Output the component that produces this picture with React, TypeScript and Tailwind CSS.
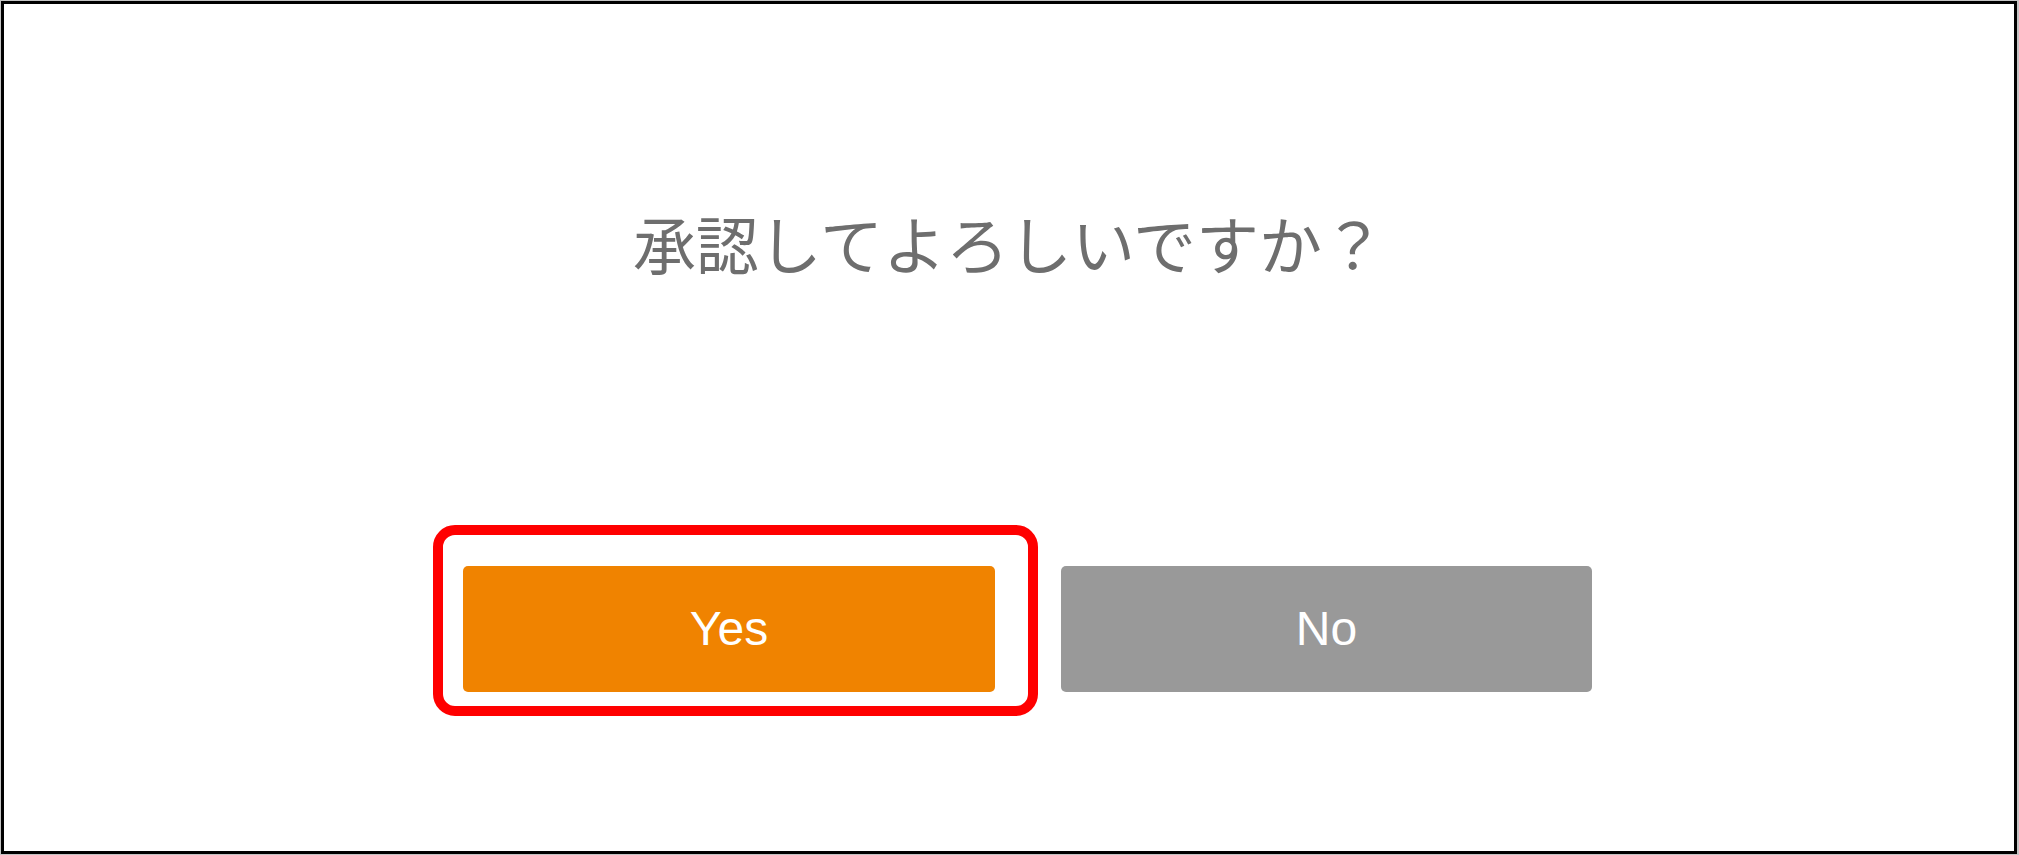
import React from "react";

const App: React.FC = () => {
  const handleYes = () => {};
  const handleNo = () => {};

  return (
    <div className="h-[855px] w-[2019px] bg-[#c4c4c4] pt-px pl-px pr-[2px] pb-px">
      <div
        className="flex h-full w-full flex-col items-center border-[3px] border-black bg-white"
        style={{ fontFamily: '"Noto Sans CJK JP", "Liberation Sans", sans-serif' }}
      >
        <p className="mt-[206px] text-[63px] leading-none text-[#6e6e6e]">承認してよろしいですか？</p>

        <div className="mt-[293px] flex gap-[66px] pl-[37px]">
          <div className="relative">
            <button
              type="button"
              onClick={handleYes}
              className="h-[126px] w-[532px] rounded-[5px] bg-[#f08300] text-[48px] text-white"
              style={{ fontFamily: '"Liberation Sans", Arial, sans-serif' }}
            >
              Yes
            </button>
            {/* annotation frame */}
            <div className="pointer-events-none absolute -left-[30px] -top-[41px] h-[191px] w-[605px] rounded-[22px] border-[10px] border-[#ff0000]" />
          </div>
          <button
            type="button"
            onClick={handleNo}
            className="h-[126px] w-[531px] rounded-[5px] bg-[#999999] text-[48px] text-white"
            style={{ fontFamily: '"Liberation Sans", Arial, sans-serif' }}
          >
            No
          </button>
        </div>
      </div>
    </div>
  );
};

export default App;
